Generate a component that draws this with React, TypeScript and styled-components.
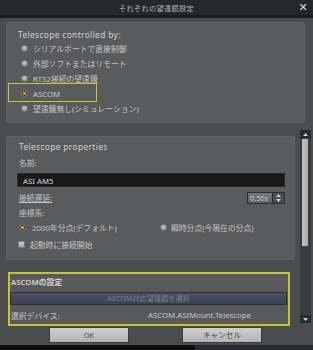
import React from 'react';
import styled, { createGlobalStyle } from 'styled-components';

const GlobalStyle = createGlobalStyle`
  html, body {
    margin: 0;
    padding: 0;
    background: #141517;
  }
  body {
    font-family: "Noto Sans", "Noto Sans CJK JP", sans-serif;
  }
`;

const Dialog = styled.div`
  width: 313px;
  height: 350px;
  display: flex;
  flex-direction: column;
  background: #4b4c4e;
  color: #c8c8c8;
  overflow: hidden;
`;

const TitleBar = styled.div`
  height: 15px;
  flex: none;
  display: flex;
  align-items: center;
  justify-content: center;
  position: relative;
  background: #24272c;
  border-bottom: 3px solid #1b1c1f;
  font-family: "Noto Sans CJK JP", sans-serif;
  font-size: 7.2px;
  letter-spacing: 0.3px;
  color: #aeb0b4;
`;

const CloseButton = styled.span`
  position: absolute;
  right: 5px;
  top: 0;
  height: 15px;
  line-height: 15px;
  font-family: "DejaVu Sans", sans-serif;
  font-size: 11px;
  font-weight: bold;
  color: #dcdcdc;
`;

const Body = styled.div`
  flex: none;
  padding-top: 4px;
  display: flex;
  flex-direction: column;
`;

const Panel = styled.div<{ $width: number }>`
  width: ${p => p.$width}px;
  margin-left: 6px;
  box-sizing: border-box;
  background: #5a5b5d;
  border: 1px solid #616264;
  border-radius: 2px;
`;

const ControlPanel = styled(Panel)`
  height: 101px;
  padding: 5px 0 0 11px;
`;

const Heading = styled.div<{ $indent?: number }>`
  height: 13px;
  line-height: 13px;
  padding-left: ${p => p.$indent ?? 0}px;
  font-size: 8.4px;
  letter-spacing: 0.35px;
  color: #d2d2d2;
  font-family: "Noto Sans", "Noto Sans CJK JP", sans-serif;
`;

const RadioRow = styled.div`
  position: relative;
  height: 15px;
  display: flex;
  align-items: center;
  gap: 5px;
  padding-left: 3px;
  font-size: 7.8px;
  font-family: "Noto Sans", "Noto Sans CJK JP", sans-serif;
  color: #c6c6c6;
`;

const Highlight = styled.div`
  position: absolute;
  left: -10px;
  top: -3px;
  width: 87px;
  height: 17px;
  border: 1.5px solid #c9c924;
`;

const Radio = styled.span<{ $checked?: boolean }>`
  width: 7px;
  height: 7px;
  flex: none;
  border-radius: 50%;
  box-sizing: border-box;
  border: 1px solid #77787b;
  background: ${p => (p.$checked ? 'radial-gradient(circle, #d89a2a 0 1.6px, #2a2a2a 1.8px 2.3px, #cfcfcf 2.5px)' : 'linear-gradient(#c8c8c8, #9a9a9a)')};
`;

const Checkbox = styled.span`
  width: 7px;
  height: 7px;
  flex: none;
  box-sizing: border-box;
  border: 1px solid #7a7b7e;
  background: linear-gradient(#cfcfcf, #9f9f9f);
`;

const ScrollArea = styled.div`
  margin-top: 7px;
  height: 196px;
  display: flex;
  overflow: hidden;
`;

const ScrollContent = styled.div`
  width: 295px;
  flex: none;
  padding-top: 6px;
  display: flex;
  flex-direction: column;
`;

const PropsPanel = styled(Panel)`
  height: 124px;
  padding: 3px 9px 0 10px;
  display: flex;
  flex-direction: column;
`;

const Label = styled.div<{ $top: number; $underline?: boolean }>`
  margin-top: ${p => p.$top}px;
  height: 12px;
  line-height: 12px;
  padding-left: 2px;
  font-size: 7.8px;
  font-family: "Noto Sans", "Noto Sans CJK JP", sans-serif;
  color: #c6c6c6;
  text-decoration: ${p => (p.$underline ? 'underline' : 'none')};
`;

const TextInput = styled.div`
  margin-top: 4px;
  height: 14px;
  line-height: 14px;
  box-sizing: border-box;
  padding-left: 5px;
  background: #19191a;
  border: 1px solid #2c2c2e;
  font-size: 7.8px;
  color: #d8d8d8;
`;

const DelayRow = styled.div`
  margin-top: 3px;
  height: 16px;
  display: flex;
  align-items: center;
  justify-content: space-between;
`;

const SpinBox = styled.div`
  width: 38px;
  height: 12px;
  display: flex;
  box-sizing: border-box;
  border: 1px solid #2d2e30;
  background: #6a6b6d;
`;

const SpinValue = styled.span`
  flex: 1;
  line-height: 10px;
  padding-left: 2px;
  font-size: 7.3px;
  color: #d0d0d0;
  background: linear-gradient(#78797b, #5e5f61);
`;

const SpinArrows = styled.span`
  width: 11px;
  display: flex;
  flex-direction: column;
  align-items: center;
  justify-content: space-around;
  background: #4a4b4d;
  border-left: 1px solid #2d2e30;
`;

const RadioGrid = styled.div`
  margin-top: 1px;
  height: 14px;
  display: grid;
  grid-template-columns: 141px 1fr;
  align-items: center;
`;

const OptionRow = styled.div<{ $gap?: number }>`
  display: flex;
  align-items: center;
  gap: ${p => p.$gap ?? 5}px;
  padding-left: 2px;
  font-size: 7.8px;
  font-family: "Noto Sans", "Noto Sans CJK JP", sans-serif;
  color: #c6c6c6;
`;

const CheckRow = styled(OptionRow)`
  margin-top: 3px;
  height: 14px;
  padding-left: 1px;
`;

const AscomGroup = styled.div`
  margin: 12px 5px 0 8px;
  height: 54px;
  box-sizing: border-box;
  border: 2px solid #c6c62a;
  background: #58595b;
  padding: 1px 1px 0 0;
  display: flex;
  flex-direction: column;
`;

const AscomTitle = styled.div`
  height: 14px;
  line-height: 14px;
  padding-left: 1px;
  font-size: 7.8px;
  font-weight: 600;
  font-family: "Noto Sans", "Noto Sans CJK JP", sans-serif;
  color: #d4d4d4;
`;

const ChooseButton = styled.div`
  margin-top: 3px;
  height: 13px;
  line-height: 11px;
  box-sizing: border-box;
  text-align: center;
  border: 1px solid #2b2e37;
  border-radius: 1px;
  background: linear-gradient(#4a5062, #3c4253);
  font-size: 7.2px;
  font-family: "Noto Sans", "Noto Sans CJK JP", sans-serif;
  color: #7b8090;
`;

const DeviceRow = styled.div`
  margin-top: 3px;
  height: 14px;
  display: grid;
  grid-template-columns: 137px 1fr;
  align-items: center;
  padding-left: 1px;
  font-size: 7.8px;
  font-family: "Noto Sans", "Noto Sans CJK JP", sans-serif;
  color: #c6c6c6;
`;

const ScrollBar = styled.div`
  width: 11px;
  height: 193px;
  margin-left: 5px;
  flex: none;
  display: flex;
  flex-direction: column;
  background: #3b3c3e;
`;

const ScrollArrow = styled.div`
  height: 8px;
  flex: none;
  display: flex;
  align-items: center;
  justify-content: center;
  background: #2a2b2d;
`;

const ScrollTrack = styled.div`
  flex: 1;
  padding: 0 3px 0 2px;
  margin: 1px 0;
`;

const ScrollThumb = styled.div`
  height: 107px;
  background: linear-gradient(90deg, #c2c2c2, #adadad);
`;

const ButtonRow = styled.div`
  margin-top: 1px;
  height: 16px;
  flex: none;
  display: flex;
  padding-left: 49px;
  gap: 53px;
`;

const DialogButton = styled.div`
  width: 80px;
  height: 16px;
  box-sizing: border-box;
  border: 1px solid #3a3b3d;
  background: linear-gradient(#d0d0d0, #b2b2b2);
  text-align: center;
  line-height: 14px;
  font-size: 7.6px;
  font-family: "Noto Sans", "Noto Sans CJK JP", sans-serif;
  color: #4a4a4a;
`;

const BottomStrip = styled.div`
  margin-top: 2px;
  flex: 1;
  background: linear-gradient(90deg, #0d0d0e 0 195px, #2a2b2e 195px);
`;

const Triangle = ({ up }: { up: boolean }) => (
  <svg width="5" height="3" viewBox="0 0 5 3">
    <path d={up ? 'M0 3 L2.5 0 L5 3 Z' : 'M0 0 L2.5 3 L5 0 Z'} fill="#d0d0d0" />
  </svg>
);

const sources = [
  'シリアルポートで直接制御',
  '外部ソフトまたはリモート',
  'RTS2接続の望遠鏡',
  'ASCOM',
  '望遠鏡無し(シミュレーション)',
];

export default function App() {
  return (
    <>
      <GlobalStyle />
      <Dialog>
        <TitleBar>
          それぞれの望遠鏡設定
          <CloseButton>✕</CloseButton>
        </TitleBar>
        <Body>
          <ControlPanel $width={299}>
            <Heading>Telescope controlled by:</Heading>
            {sources.map(s => (
              <RadioRow key={s}>
                <Radio $checked={s === 'ASCOM'} />
                {s}
                {s === 'ASCOM' && <Highlight />}
              </RadioRow>
            ))}
          </ControlPanel>

          <ScrollArea>
            <ScrollContent>
              <PropsPanel $width={289}>
                <Heading $indent={2}>Telescope properties</Heading>
                <Label $top={4}>名前:</Label>
                <TextInput>ASI AM5</TextInput>
                <DelayRow>
                  <Label $top={0} $underline>接続遅延:</Label>
                  <SpinBox>
                    <SpinValue>0.50s</SpinValue>
                    <SpinArrows>
                      <Triangle up />
                      <Triangle up={false} />
                    </SpinArrows>
                  </SpinBox>
                </DelayRow>
                <Label $top={1}>座標系:</Label>
                <RadioGrid>
                  <OptionRow $gap={6}>
                    <Radio $checked />
                    2000年分点(デフォルト)
                  </OptionRow>
                  <OptionRow $gap={4}>
                    <Radio />
                    瞬時分点(今現在の分点)
                  </OptionRow>
                </RadioGrid>
                <CheckRow $gap={5}>
                  <Checkbox />
                  起動時に接続開始
                </CheckRow>
              </PropsPanel>

              <AscomGroup>
                <AscomTitle>ASCOMの設定</AscomTitle>
                <ChooseButton>ASCOM対応望遠鏡を選択</ChooseButton>
                <DeviceRow>
                  <span>選択デバイス:</span>
                  <span>ASCOM.ASIMount.Telescope</span>
                </DeviceRow>
              </AscomGroup>
            </ScrollContent>

            <ScrollBar>
              <ScrollArrow>
                <Triangle up />
              </ScrollArrow>
              <ScrollTrack>
                <ScrollThumb />
              </ScrollTrack>
              <ScrollArrow>
                <Triangle up={false} />
              </ScrollArrow>
            </ScrollBar>
          </ScrollArea>
        </Body>

        <ButtonRow>
          <DialogButton>OK</DialogButton>
          <DialogButton>キャンセル</DialogButton>
        </ButtonRow>
        <BottomStrip />
      </Dialog>
    </>
  );
}
